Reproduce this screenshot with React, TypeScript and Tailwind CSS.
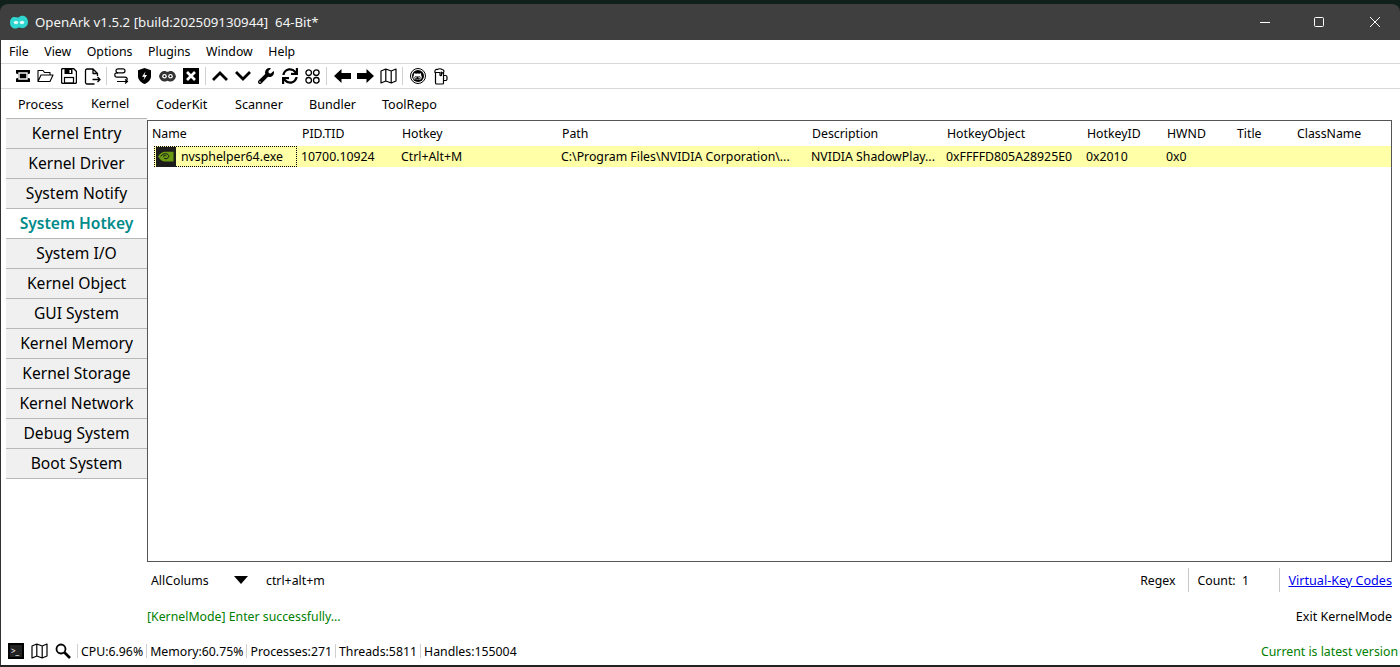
import { FaGithubAlt, FaSync, FaWrench } from "react-icons/fa";

const sideItems = [
  "Kernel Entry",
  "Kernel Driver",
  "System Notify",
  "System Hotkey",
  "System I/O",
  "Kernel Object",
  "GUI System",
  "Kernel Memory",
  "Kernel Storage",
  "Kernel Network",
  "Debug System",
  "Boot System",
];

const ToolBtn = ({ children }: { children: React.ReactNode }) => (
  <div className="flex h-6 w-[23.2px] items-center justify-center text-black">
    {children}
  </div>
);

const ToolSep = () => <div className="mx-[2px] h-[18px] w-[2px] border-l border-[#d0d0d0]" />;

const MapIcon = () => (
  <svg width="17" height="16" viewBox="0 0 17 16" fill="none" stroke="#000" strokeWidth="1.2" strokeLinejoin="round">
    <path d="M1 3 5.800 1l5.400 2L16 1v12l-4.800 2-5.400-2L1 15zM5.800 1v12M11.200 3v12" />
  </svg>
);

const Ark = () => (
  <svg width="18" height="14" viewBox="0 0 18 14">
    <path d="M0 7.500C0 4 2 2 4.500 2 6 2 7 2.600 8.500 2.400 10 1 11.500.500 13 .8c3 .5 5 3 5 6.200 0 3.500-2.500 6-5.500 6-1.500 0-2.500-.6-3.500-.6S7 13.500 5 13.500C2 13.500 0 11 0 7.500z" fill="#2fd6d0" />
    <ellipse cx="6" cy="7.500" rx="2.200" ry="1.700" fill="#dffcfb" />
    <ellipse cx="12" cy="7.500" rx="2.200" ry="1.700" fill="#dffcfb" />
  </svg>
);

const NvidiaIcon = () => (
  <div className="flex h-[20px] w-[20px] items-center justify-center bg-[#1c1c1a]">
    <svg width="16" height="11" viewBox="0 0 16 11">
      <path d="M0 5.500C2 2 5 .5 8 .8h7.500v9.700H7C4 10.500 2 8.500 0 5.500z" fill="#6b9a12" />
      <path d="M2.500 5.500C4.500 3 7 2.200 9 3c2 .8 2.300 2.500 1.200 3.700-1.200 1.300-3.200 1.300-4.200.3M5 5.500C6.300 4.300 7.500 4.200 8.300 5" fill="none" stroke="#1c1c1a" strokeWidth="1" />
    </svg>
  </div>
);

export default function App() {
  return (
    <div className="flex h-[667px] w-[1400px] flex-col overflow-hidden bg-[#10201a] font-['Noto_Sans','Open_Sans',sans-serif] text-[12.3px] text-black">
      <div className="h-[4px] shrink-0" />
      <div className="flex h-[36px] shrink-0 items-center rounded-t-lg bg-[#3f3f3f] pl-[10px] text-[#f4f4f4]">
        <Ark />
        <span className="ml-[7px] pt-[2px] text-[13.25px]">OpenArk v1.5.2 [build:202509130944]&nbsp; 64-Bit*</span>
        <div className="ml-auto flex items-center pr-[1px]">
          <svg width="10" height="10" viewBox="0 0 10 10" stroke="#fff" fill="none" className="mr-[44px]"><path d="M0 5.500h10" /></svg>
          <svg width="10" height="10" viewBox="0 0 10 10" stroke="#fff" fill="none" className="mr-[46px]"><rect x=".5" y=".5" width="9" height="9" rx="1" /></svg>
          <svg width="10" height="10" viewBox="0 0 10 10" stroke="#fff" fill="none" className="mr-[19px]"><path d="M0 0l10 10M10 0 0 10" /></svg>
        </div>
      </div>

      <div className="flex min-h-0 flex-1 flex-col border-l border-[#333] bg-white">
        <div className="flex h-[23px] shrink-0 items-center gap-[15.6px] pl-[8px] pt-[2px] leading-none">
          <span>File</span>
          <span>View</span>
          <span>Options</span>
          <span>Plugins</span>
          <span>Window</span>
          <span>Help</span>
        </div>

        <div className="flex h-[26px] shrink-0 items-center border-y border-[#d8d8d8] pl-[10px]">
          <ToolBtn>
            <svg width="16" height="12" viewBox="0 0 16 12">
              <path d="M1 0h14v3.500a2.500 2.500 0 0 0 0 5V12H1V8.500a2.500 2.500 0 0 0 0-5z" fill="#000" />
              <rect x="4" y="3" width="8" height="6" fill="none" stroke="#fff" strokeWidth="1.400" />
            </svg>
          </ToolBtn>
          <ToolBtn>
            <svg width="17" height="14" viewBox="0 0 17 14" fill="none" stroke="#000" strokeWidth="1.100" strokeLinejoin="round">
              <path d="M1 12.500V1.500h5l1.500 2H13v2.500M1 12.500 4 6h12l-3 6.500z" />
            </svg>
          </ToolBtn>
          <ToolBtn>
            <svg width="16" height="16" viewBox="0 0 16 16">
              <path d="M2 .5h10.500L15.500 3.500V14a1.500 1.500 0 0 1-1.500 1.500H2A1.500 1.500 0 0 1 .5 14V2A1.500 1.500 0 0 1 2 .5z" fill="none" stroke="#000" strokeWidth="1.400" />
              <rect x="3.500" y="1" width="8" height="5" fill="#000" />
              <rect x="8.500" y="2" width="1.500" height="3" fill="#fff" />
              <rect x="3.500" y="9.500" width="9" height="5.500" fill="none" stroke="#000" strokeWidth="1.200" />
            </svg>
          </ToolBtn>
          <ToolBtn>
            <svg width="17" height="17" viewBox="0 0 17 17" fill="none" stroke="#000" strokeWidth="1.300" strokeLinejoin="round">
              <path d="M10.500 16H3a1.500 1.500 0 0 1-1.500-1.500v-12A1.500 1.500 0 0 1 3 1h6l4.500 4.500V8M9 1v4.500h4.500M8.500 11.500H16M13.500 9 16 11.500 13.500 14" />
            </svg>
          </ToolBtn>
          <ToolSep />
          <ToolBtn>
            <svg width="15" height="16" viewBox="0 0 15 16" fill="none" stroke="#000" strokeWidth="1.200">
              <rect x="2" y=".8" width="9" height="4" rx="2" />
              <path d="M4 4.800H3a2 2 0 0 0 0 4.400h8a2 2 0 0 1 0 4.300H3M11 11.500l2.500 2-2.500 2" />
            </svg>
          </ToolBtn>
          <ToolBtn>
            <svg width="13" height="16" viewBox="0 0 13 16">
              <path d="M6.500 0 13 2.200v6c0 3.500-3 6.300-6.500 7.800C3 14.500 0 11.700 0 8.200v-6z" fill="#000" />
              <path d="M7.500 3.500 4 8.800h2.500l-1 3.500L9 7H6.500z" fill="#fff" />
            </svg>
          </ToolBtn>
          <ToolBtn>
            <svg width="17" height="12" viewBox="0 0 17 12">
              <path d="M0 6.500C1 2.500 3 1 5.500 1 7 1 7.500 1.800 8.500 1.800S10 1 11.500 1C14 1 16 2.500 17 6.500c-1 3.500-3 5-5.500 5-1.500 0-2-.8-3-.8s-1.500.8-3 .8c-2.500 0-4.500-1.500-5.500-5z" fill="#333" />
              <circle cx="5.500" cy="6.300" r="2.300" fill="#fff" />
              <circle cx="11.500" cy="6.300" r="2.300" fill="#fff" />
              <circle cx="5.500" cy="6.300" r="1" fill="#000" />
              <circle cx="11.500" cy="6.300" r="1" fill="#000" />
            </svg>
          </ToolBtn>
          <ToolBtn>
            <svg width="16" height="16" viewBox="0 0 16 16">
              <rect width="16" height="16" fill="#000" />
              <path d="m4 4 8 8M12 4l-8 8" stroke="#fff" strokeWidth="2.600" />
            </svg>
          </ToolBtn>
          <ToolSep />
          <ToolBtn>
            <svg width="16" height="10" viewBox="0 0 16 10" fill="none" stroke="#000" strokeWidth="2.800"><path d="m1 9 7-7 7 7" /></svg>
          </ToolBtn>
          <ToolBtn>
            <svg width="16" height="10" viewBox="0 0 16 10" fill="none" stroke="#000" strokeWidth="2.800"><path d="m1 1 7 7 7-7" /></svg>
          </ToolBtn>
          <ToolBtn><FaWrench size={16} /></ToolBtn>
          <ToolBtn><FaSync size={16} /></ToolBtn>
          <ToolBtn>
            <svg width="15" height="15" viewBox="0 0 15 15" fill="none" stroke="#000" strokeWidth="1.300">
              <circle cx="3.700" cy="3.700" r="2.800" />
              <circle cx="11.300" cy="3.700" r="2.800" />
              <circle cx="3.700" cy="11.300" r="2.800" />
              <circle cx="11.300" cy="11.300" r="2.800" />
            </svg>
          </ToolBtn>
          <ToolSep />
          <ToolBtn>
            <svg width="17" height="14" viewBox="0 0 17 14"><path d="M0 7 7.500 0v4H17v6H7.500v4z" fill="#000" /></svg>
          </ToolBtn>
          <ToolBtn>
            <svg width="17" height="14" viewBox="0 0 17 14"><path d="M17 7 9.500 0v4H0v6h9.500v4z" fill="#000" /></svg>
          </ToolBtn>
          <ToolBtn><MapIcon /></ToolBtn>
          <ToolSep />
          <ToolBtn>
            <div className="flex h-[16px] w-[16px] items-center justify-center rounded-full border-[1.5px] border-black">
              <div className="flex h-[12px] w-[12px] items-center justify-center rounded-full bg-black text-white">
                <FaGithubAlt size={9} />
              </div>
            </div>
          </ToolBtn>
          <ToolBtn>
            <svg width="14" height="17" viewBox="0 0 14 17" fill="none" stroke="#000" strokeWidth="1.200">
              <path d="M1.500 4.500V15a1 1 0 0 0 1 1h6a1 1 0 0 0 1-1V4.500" />
              <path d="M1 4.500C.5 2 2 1 3.500 1.500 4.500.5 7 .5 8 1.500c1.500 0 2.500 1.500 1.500 3-.5.5-1.500.5-2 0V7c0 1-1.500 1-1.500 0V4.500z" fill="#fff" />
              <path d="M9.500 7.500h2A1.500 1.500 0 0 1 13 9v2a1.500 1.500 0 0 1-1.500 1.500h-2" />
            </svg>
          </ToolBtn>
        </div>

        <div className="flex h-[29px] shrink-0 items-center pl-[17px] text-[12.6px] leading-none">
          <span className="w-[73px] pt-[4px]">Process</span>
          <span className="w-[65px] pt-[1px]">Kernel</span>
          <span className="w-[79px] pt-[4px]">CoderKit</span>
          <span className="w-[74px] pt-[4px]">Scanner</span>
          <span className="w-[73px] pt-[4px]">Bundler</span>
          <span className="pt-[4px]">ToolRepo</span>
        </div>

        <div className="flex min-h-0 flex-1 pl-[5px]">
          <div className="w-[141px] shrink-0">
            <div className="border-t border-[#b8b8b8]">
              {sideItems.map((item) => (
                <div
                  key={item}
                  className={
                    item === "System Hotkey"
                      ? "flex h-[30px] items-center justify-center border-b border-[#b8b8b8] bg-white text-[15.6px] font-semibold text-[#008b8b]"
                      : "flex h-[30px] items-center justify-center border-b border-[#b8b8b8] bg-[#f0f0f0] text-[15.6px]"
                  }
                >
                  {item}
                </div>
              ))}
            </div>
          </div>

          <div className="flex min-w-0 flex-1 flex-col pr-[8px]">
            <div className="mt-[2px] h-[442px] shrink-0 border border-[#555] bg-white">
              <div className="flex h-[25px] items-center pl-[4px] pt-[2px]">
                <span className="w-[150px]">Name</span>
                <span className="w-[100px]">PID.TID</span>
                <span className="w-[160px]">Hotkey</span>
                <span className="w-[250px]">Path</span>
                <span className="w-[135px]">Description</span>
                <span className="w-[140px]">HotkeyObject</span>
                <span className="w-[80px]">HotkeyID</span>
                <span className="w-[70px]">HWND</span>
                <span className="w-[60px]">Title</span>
                <span>ClassName</span>
              </div>
              <div className="ml-[6px] flex h-[21px] items-center bg-[#ffffa8] pt-[1px]">
                <div className="-mt-[1px] flex h-[21px] w-[143px] items-center border border-dotted border-black pl-[1px]">
                  <NvidiaIcon />
                  <span className="ml-[5px] pt-[1px]">nvsphelper64.exe</span>
                </div>
                <span className="ml-[4px] w-[100px] pt-[1px]">10700.10924</span>
                <span className="w-[160px] pt-[1px]">Ctrl+Alt+M</span>
                <span className="w-[250px] pt-[1px]">C:\Program Files\NVIDIA Corporation\...</span>
                <span className="w-[135px] pt-[1px]">NVIDIA ShadowPlay...</span>
                <span className="w-[140px] pt-[1px]">0xFFFFD805A28925E0</span>
                <span className="w-[80px] pt-[1px]">0x2010</span>
                <span className="pt-[1px]">0x0</span>
              </div>
            </div>

            <div className="flex h-[36px] shrink-0 items-center pl-[4px]">
              <span className="w-[83px] pt-[2px]">AllColums</span>
              <div className="h-0 w-0 border-x-[7px] border-t-[8px] border-x-transparent border-t-black" />
              <span className="ml-[18px] pt-[2px]">ctrl+alt+m</span>
              <span className="ml-auto pt-[2px]">Regex</span>
              <div className="mr-[8px] ml-[13px] h-[24px] w-px bg-[#c8c8c8]" />
              <span className="w-[82px] pt-[2px]">Count:&nbsp; 1</span>
              <div className="mr-[8px] h-[24px] w-px bg-[#c8c8c8]" />
              <span className="pt-[2px] text-[12.6px] text-[#0000ee] underline">Virtual-Key Codes</span>
            </div>

            <div className="flex h-[36px] shrink-0 items-center justify-between pt-[2px]">
              <span className="text-[#008000]">[KernelMode] Enter successfully...</span>
              <span className="text-[12.5px]">Exit KernelMode</span>
            </div>
          </div>
        </div>

        <div className="flex h-[31px] shrink-0 items-center pl-[7px] pt-[3px] leading-none">
          <div className="flex h-[16px] w-[16px] items-center border-2 border-black bg-[#222] pl-[1px] text-[8px] text-white">&gt;_</div>
          <div className="ml-[7px] flex"><MapIcon /></div>
          <svg width="16" height="16" viewBox="0 0 16 16" fill="none" stroke="#000" className="ml-[7px]">
            <circle cx="6" cy="6" r="4.500" strokeWidth="1.800" />
            <path d="m9.500 9.500 5.500 5.500" strokeWidth="2.600" />
          </svg>
          <div className="ml-[6px] h-[14px] w-px bg-[#d0d0d0]" />
          <span className="ml-[3px] pt-[2px]">CPU:6.96%</span>
          <div className="mx-[3px] h-[14px] w-px bg-[#d0d0d0]" />
          <span className="pt-[2px]">Memory:60.75%</span>
          <div className="mx-[3px] h-[14px] w-px bg-[#d0d0d0]" />
          <span className="pt-[2px]">Processes:271</span>
          <div className="mx-[3px] h-[14px] w-px bg-[#d0d0d0]" />
          <span className="pt-[2px]">Threads:5811</span>
          <div className="mx-[3px] h-[14px] w-px bg-[#d0d0d0]" />
          <span className="pt-[2px]">Handles:155004</span>
          <span className="ml-auto pr-[2px] pt-[2px] text-[#008000]">Current is latest version</span>
        </div>
      </div>
      <div className="h-[2px] shrink-0 bg-[#222]" />
    </div>
  );
}
